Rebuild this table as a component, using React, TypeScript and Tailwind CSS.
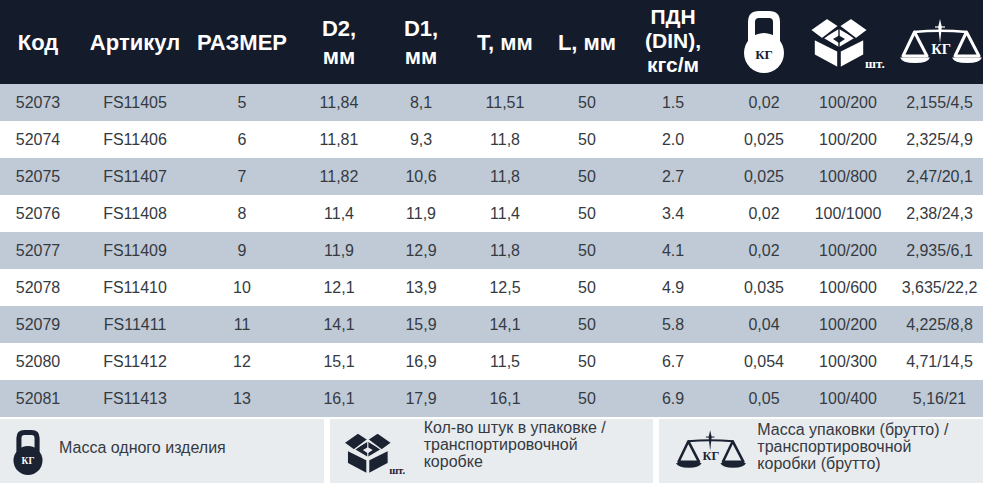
import React from "react";

const NAVY = "#141b2b";
const PANEL = "#e9ecef";
const INK = "#1b2232";

const COLS =
  "grid grid-cols-[76px_118px_96px_98px_66px_102px_62px_110px_72px_96px_87px]";

const ROWS = [
  ["52073", "FS11405", "5", "11,84", "8,1", "11,51", "50", "1.5", "0,02", "100/200", "2,155/4,5"],
  ["52074", "FS11406", "6", "11,81", "9,3", "11,8", "50", "2.0", "0,025", "100/200", "2,325/4,9"],
  ["52075", "FS11407", "7", "11,82", "10,6", "11,8", "50", "2.7", "0,025", "100/800", "2,47/20,1"],
  ["52076", "FS11408", "8", "11,4", "11,9", "11,4", "50", "3.4", "0,02", "100/1000", "2,38/24,3"],
  ["52077", "FS11409", "9", "11,9", "12,9", "11,8", "50", "4.1", "0,02", "100/200", "2,935/6,1"],
  ["52078", "FS11410", "10", "12,1", "13,9", "12,5", "50", "4.9", "0,035", "100/600", "3,635/22,2"],
  ["52079", "FS11411", "11", "14,1", "15,9", "14,1", "50", "5.8", "0,04", "100/200", "4,225/8,8"],
  ["52080", "FS11412", "12", "15,1", "16,9", "11,5", "50", "6.7", "0,054", "100/300", "4,71/14,5"],
  ["52081", "FS11413", "13", "16,1", "17,9", "16,1", "50", "6.9", "0,05", "100/400", "5,16/21"],
];

const SERIF = "'Liberation Serif', 'Times New Roman', serif";

// гиря с надписью КГ
function Kettlebell({ fg, text, w, h }: { fg: string; text: string; w: number; h: number }) {
  return (
    <svg width={w} height={h} viewBox="0 0 42 62">
      <path d="M8.5 30 V11 Q8.5 3.5 16 3.5 H26 Q33.5 3.5 33.5 11 V30" fill="none" stroke={fg} strokeWidth="7" />
      <circle cx="21" cy="42" r="20" fill={fg} />
      <text x="21" y="47.5" textAnchor="middle" fontFamily={SERIF} fontWeight="bold" fontSize="13" fill={text}>
        КГ
      </text>
    </svg>
  );
}

// открытая коробка + шт.
function BoxIcon({ fg, cut, w, h }: { fg: string; cut: string; w: number; h: number }) {
  const p = { fill: fg, stroke: cut, strokeWidth: 1.6, strokeLinejoin: "round" as const };
  return (
    <svg width={w} height={h} viewBox="0 0 78 56">
      <path d="M12 21 L29 11 L46 21 L29 31 Z" {...p} />
      <path d="M23 22 L29 18.5 L35 22 L29 26 Z" fill={cut} />
      <path d="M4 22 L28 34 L28 51 L4 38 Z" {...p} />
      <path d="M30 34 L54 22 L54 38 L30 51 Z" {...p} />
      <path d="M0 13 L17 1 L29 9 L12 22 Z" {...p} />
      <path d="M29 9 L41 1 L58 13 L46 22 Z" {...p} />
      <path d="M29 11 V33" stroke={cut} strokeWidth="1.4" />
      <text x="55" y="51" fontFamily={SERIF} fontWeight="bold" fontSize="13" fill={fg}>
        шт.
      </text>
    </svg>
  );
}

// весы с надписью КГ
function ScaleIcon({ fg, w, h }: { fg: string; w: number; h: number }) {
  return (
    <svg width={w} height={h} viewBox="0 0 82 44">
      <path d="M40 0 L41.8 8 L40 24 L38.2 8 Z" fill={fg} />
      <path d="M35 8 H45" stroke={fg} strokeWidth="1.2" />
      <path d="M14 13 Q40 10.5 67 13" fill="none" stroke={fg} strokeWidth="2.4" />
      <path d="M14.5 13 L3 37 H27 Z" fill="none" stroke={fg} strokeWidth="3" strokeLinejoin="round" />
      <path d="M66.5 13 L55 37 H79 Z" fill="none" stroke={fg} strokeWidth="3" strokeLinejoin="round" />
      <path d="M0 38.5 H30 Q28 44 15 44 Q2 44 0 38.5 Z" fill={fg} />
      <path d="M52 38.5 H82 Q80 44 67 44 Q54 44 52 38.5 Z" fill={fg} />
      <text x="41" y="35" textAnchor="middle" fontFamily={SERIF} fontWeight="bold" fontSize="14.5" fill={fg}>
        КГ
      </text>
    </svg>
  );
}

function HeadCell({ children, lead }: { children: React.ReactNode; lead?: string }) {
  return (
    <div
      className={`flex flex-col items-center justify-center text-center font-bold whitespace-nowrap ${lead ?? "text-[22px] leading-[25px]"}`}
    >
      {children}
    </div>
  );
}

export default function App() {
  return (
    <div className="w-[983px] h-[483px] overflow-hidden bg-white font-['Liberation_Sans',Arial,sans-serif]">
      <div className={`${COLS} h-[84px] bg-[#141b2b] text-white`}>
        <HeadCell>Код</HeadCell>
        <HeadCell>Артикул</HeadCell>
        <HeadCell>РАЗМЕР</HeadCell>
        <HeadCell lead="text-[22px] leading-[28px] pt-[2px]">
          <span>D2,</span>
          <span>мм</span>
        </HeadCell>
        <HeadCell lead="text-[22px] leading-[28px] pt-[2px]">
          <span>D1,</span>
          <span>мм</span>
        </HeadCell>
        <HeadCell>T, мм</HeadCell>
        <HeadCell>L, мм</HeadCell>
        <HeadCell lead="text-[21px] leading-[24px] pb-[3px]">
          <span>ПДН</span>
          <span>(DIN),</span>
          <span>кгс/м</span>
        </HeadCell>
        <div className="flex items-center justify-center">
          <Kettlebell fg="#ffffff" text={NAVY} w={42} h={62} />
        </div>
        <div className="flex items-center justify-center pt-[6px] pl-[2px]">
          <BoxIcon fg="#ffffff" cut={NAVY} w={78} h={56} />
        </div>
        <div className="flex items-center justify-center pb-[2px] pl-[2px]">
          <ScaleIcon fg="#ffffff" w={82} h={44} />
        </div>
      </div>

      {ROWS.map((r, i) => (
        <div
          key={r[0]}
          className={`${COLS} h-[37px] text-[16px] text-[#353a42] ${i % 2 === 0 ? "bg-[#c0cad6]" : "bg-white"}`}
        >
          {r.map((c, j) => (
            <div key={j} className="flex items-center justify-center whitespace-nowrap">
              {c}
            </div>
          ))}
        </div>
      ))}

      <div className="mt-[2px] grid grid-cols-3 gap-[6px] h-[64px] text-[16px] leading-[17px] text-[#353a42]">
        <div className="flex items-center gap-[15px] bg-[#e9ecef] pl-[12px] pt-[2px]">
          <Kettlebell fg={INK} text="#ffffff" w={32} h={45} />
          <span className="-mt-[9px]">Масса одного изделия</span>
        </div>
        <div className="flex items-start gap-[16px] bg-[#e9ecef] pl-[14px]">
          <div className="pt-[13px]">
            <BoxIcon fg={INK} cut={PANEL} w={64} h={46} />
          </div>
          <span>
            Кол-во штук в упаковке /
            <br />
            транспортировочной
            <br />
            коробке
          </span>
        </div>
        <div className="flex items-start gap-[11px] bg-[#e9ecef] pl-[17px]">
          <div className="pt-[11px]">
            <ScaleIcon fg={INK} w={70} h={38} />
          </div>
          <span className="pt-[2px]">
            Масса упаковки (брутто) /
            <br />
            транспортировочной
            <br />
            коробки (брутто)
          </span>
        </div>
      </div>
    </div>
  );
}
